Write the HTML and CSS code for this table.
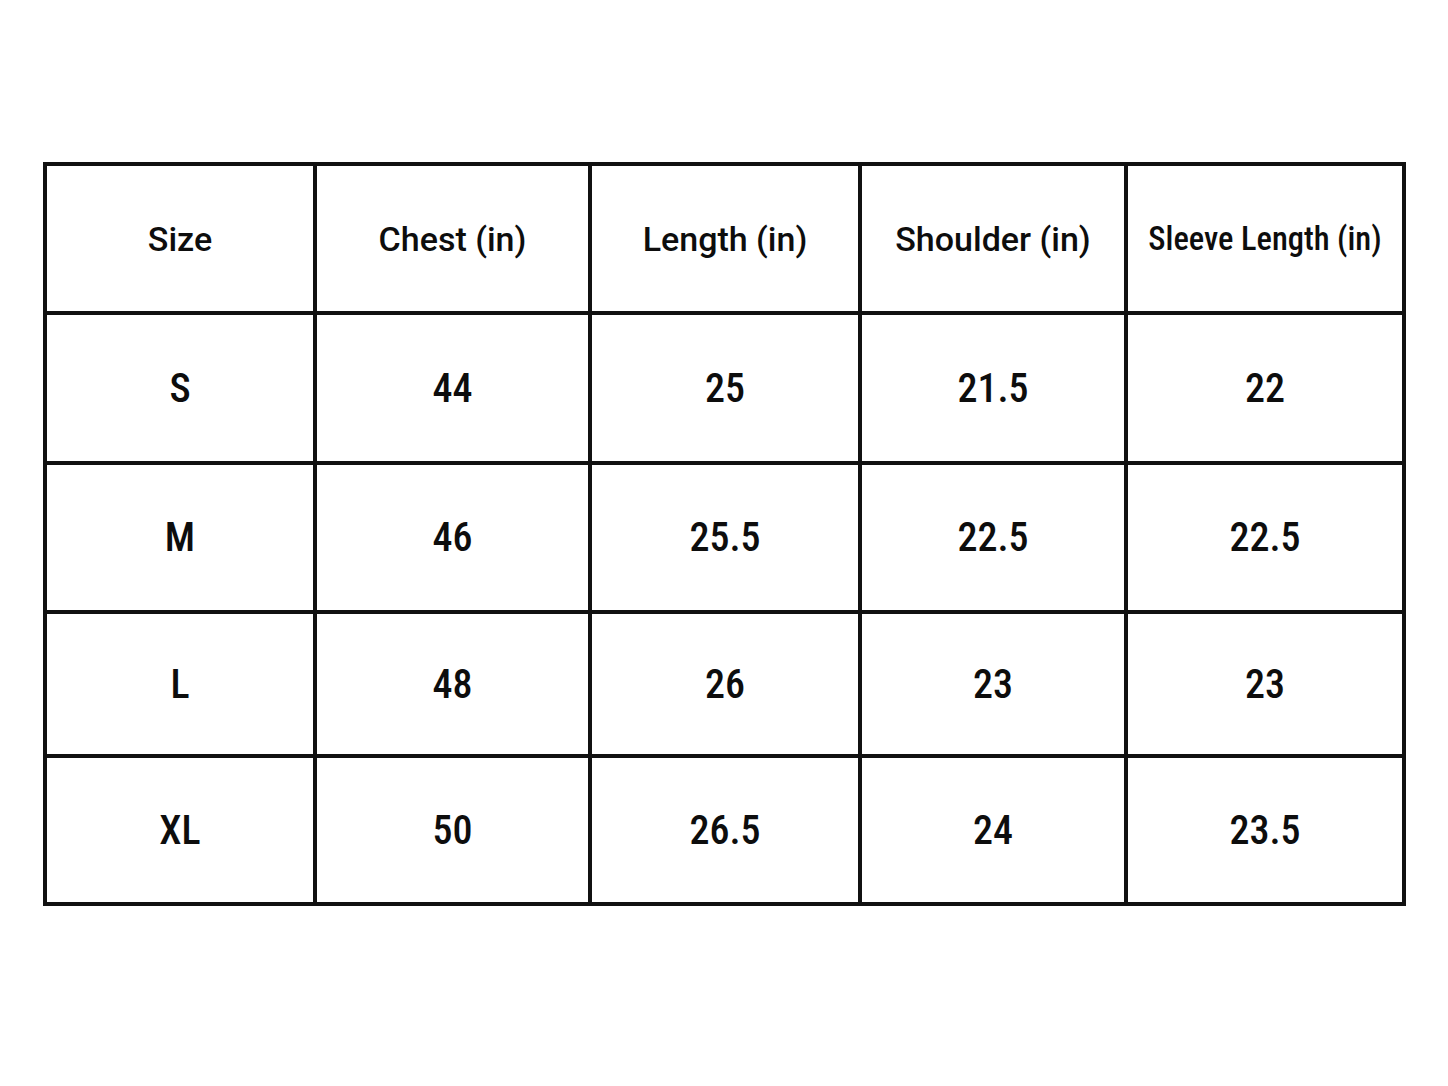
FILE: index.html
```html
<!DOCTYPE html>
<html lang="en">
<head>
<meta charset="utf-8">
<title>Size Chart</title>
<link rel="stylesheet" href="styles.css">
</head>
<body>
<main class="page">
  <table class="size-chart">
    <colgroup>
      <col class="c1"><col class="c2"><col class="c3"><col class="c4"><col class="c5">
    </colgroup>
    <thead>
      <tr class="r-head">
        <th>Size</th>
        <th>Chest (in)</th>
        <th>Length (in)</th>
        <th>Shoulder (in)</th>
        <th class="small">Sleeve Length (in)</th>
      </tr>
    </thead>
    <tbody>
      <tr class="r1"><td>S</td><td>44</td><td>25</td><td>21.5</td><td>22</td></tr>
      <tr class="r2"><td>M</td><td>46</td><td>25.5</td><td>22.5</td><td>22.5</td></tr>
      <tr class="r3"><td>L</td><td>48</td><td>26</td><td>23</td><td>23</td></tr>
      <tr class="r4"><td>XL</td><td>50</td><td>26.5</td><td>24</td><td>23.5</td></tr>
    </tbody>
  </table>
</main>
</body>
</html>
```

FILE: styles.css
```css
html, body {
  margin: 0;
  padding: 0;
  background: #ffffff;
}

.page {
  padding: 162px 0 0 43px;
}

.size-chart {
  table-layout: fixed;
  border-collapse: separate;
  border-spacing: 4px;
  background: #111111;
  width: 1363px;
}

.c1 { width: 266px; }
.c2 { width: 271px; }
.c3 { width: 266px; }
.c4 { width: 262px; }
.c5 { width: 274px; }

.size-chart th,
.size-chart td {
  background: #ffffff;
  color: #0d0d0d;
  padding: 0;
  text-align: center;
  vertical-align: middle;
  font-family: Roboto, "Liberation Sans", Arial, sans-serif;
  font-weight: 500;
}

.size-chart th {
  font-size: 34px;
  font-stretch: 88%;
}

.size-chart th.small {
  font-size: 32.5px;
  font-stretch: 80%;
}

.size-chart td {
  font-size: 40px;
  font-stretch: 76%;
}

.r-head { height: 145px; }
.r1 { height: 146px; }
.r2 { height: 145px; }
.r3 { height: 140px; }
.r4 { height: 144px; }
```
